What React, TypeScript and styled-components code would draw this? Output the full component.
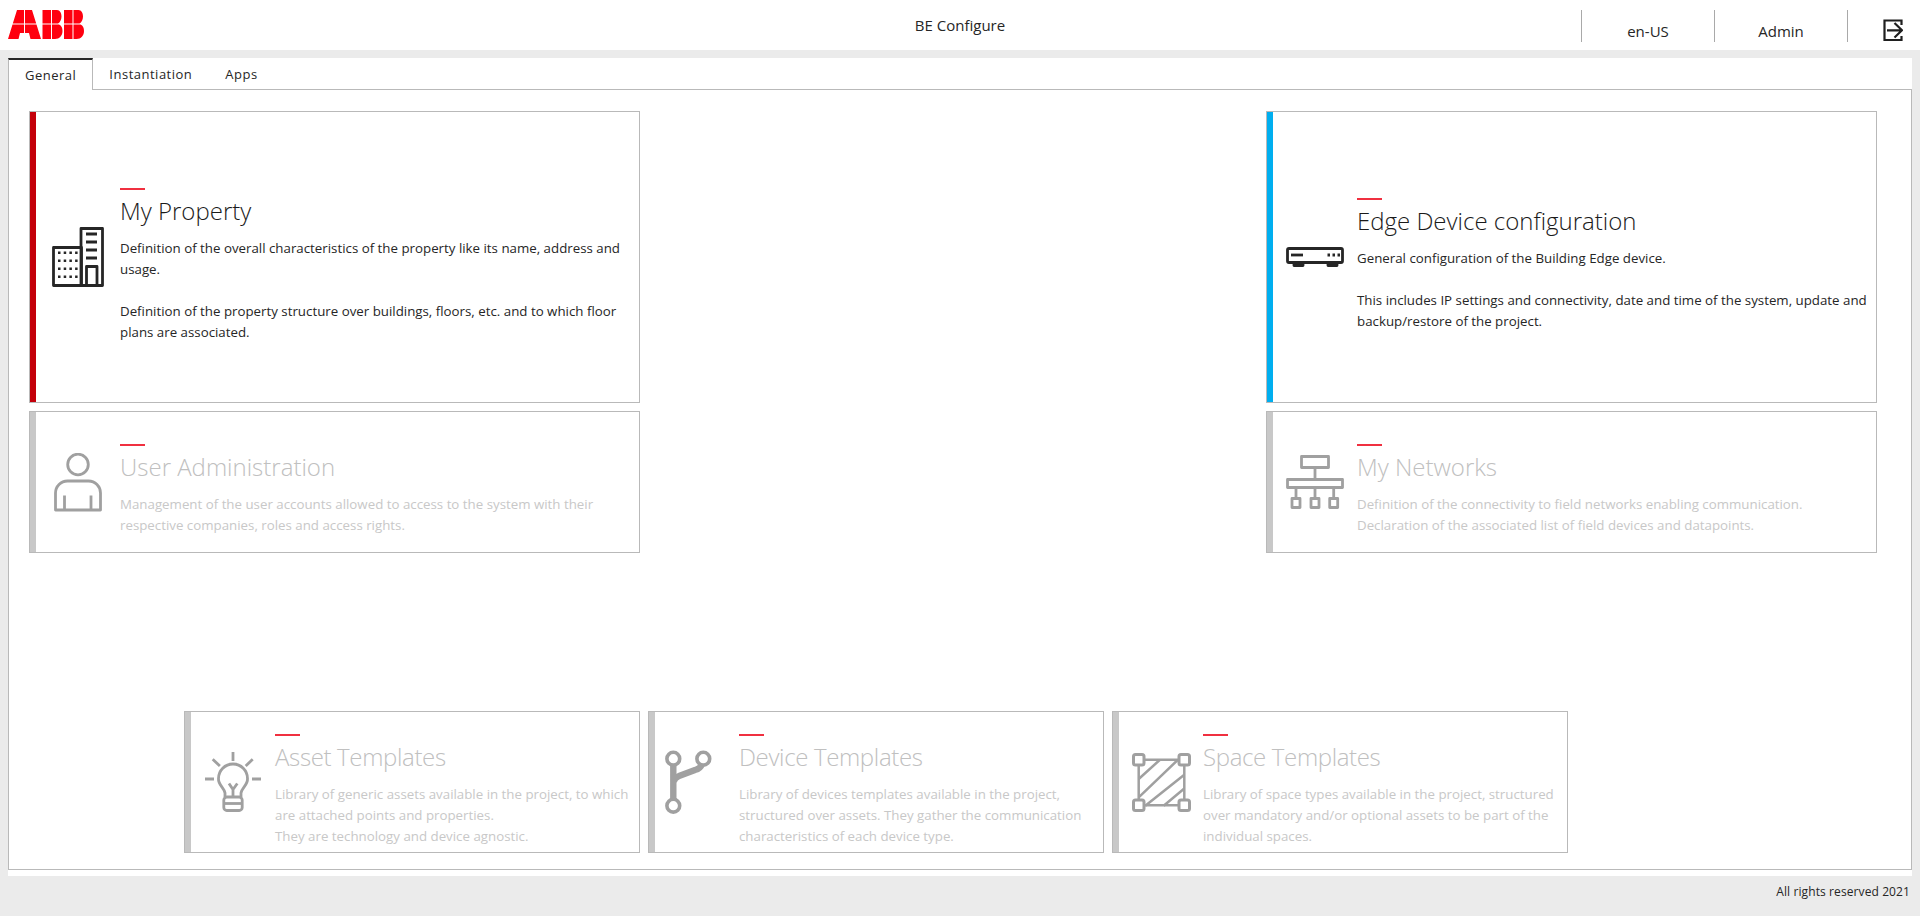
import React from 'react';
import styled, { createGlobalStyle } from 'styled-components';

const GlobalStyle = createGlobalStyle`
  html, body {
    margin: 0;
    padding: 0;
    background: #ebebeb;
    overflow: hidden;
  }
  * { box-sizing: border-box; }
`;

const Page = styled.div`
  width: 1920px;
  height: 916px;
  display: flex;
  flex-direction: column;
  font-family: "Open Sans", "Liberation Sans", sans-serif;
  color: #262626;
`;

const Header = styled.header`
  height: 50px;
  background: #fff;
  display: grid;
  grid-template-columns: 1581px 133px 133px 1fr;
  position: relative;
`;

const LogoBox = styled.div`
  padding: 10px 0 0 8px;
  svg { display: block; }
`;

const AppTitle = styled.div`
  position: absolute;
  left: 0;
  right: 0;
  top: 16px;
  text-align: center;
  font-size: 15px;
  line-height: 19px;
`;

const HeaderCell = styled.div`
  margin-top: 10px;
  height: 32px;
  border-left: 1px solid #a9a9a9;
  display: flex;
  align-items: center;
  justify-content: center;
  font-size: 15px;
  padding-top: 9px;
`;

const LogoutCell = styled(HeaderCell)`
  justify-content: flex-start;
  padding: 9px 0 0 35px;
`;

const Shell = styled.main`
  margin: 8px 8px 0;
  height: 818px;
  background: #fff;
  display: flex;
  flex-direction: column;
`;

const TabBar = styled.nav`
  display: flex;
  height: 31px;
`;

const Tab = styled.div<{ $active?: boolean }>`
  padding: 0 17px 0 16px;
  font-size: 13px;
  letter-spacing: 0.5px;
  line-height: 32px;
  color: #262626;
  ${(p) =>
    p.$active
      ? `
    border-top: 2px solid #262626;
    border-left: 1px solid #b9b9b9;
    border-right: 1px solid #b9b9b9;
    line-height: 30px;
    padding: 0 16px;
    position: relative;
    margin-bottom: -1px;
    background: #fff;
    z-index: 1;
  `
      : ''}
`;

const Panel = styled.section`
  height: 781px;
  border: 1px solid #b9b9b9;
  padding: 21px 34px 0 20px;
  display: flex;
  flex-direction: column;
`;

const TopRows = styled.div`
  display: flex;
  justify-content: space-between;
`;

const Column = styled.div`
  width: 611px;
  display: flex;
  flex-direction: column;
  gap: 8px;
`;

const TemplateRow = styled.div`
  display: flex;
  gap: 8px;
  margin: 158px 0 0 155px;

  h2 {
    letter-spacing: -0.35px;
  }
`;

const Card = styled.article<{ $h: number; $w?: number; $bar: string }>`
  width: ${(p) => p.$w ?? 611}px;
  height: ${(p) => p.$h}px;
  border: 1px solid #b9b9b9;
  display: flex;
  background: #fff;
  &::before {
    content: '';
    flex: 0 0 6px;
    background: ${(p) => p.$bar};
  }
`;

const IconSlot = styled.div<{ $dim?: boolean }>`
  flex: 0 0 84px;
  display: flex;
  align-items: center;
  justify-content: center;
  color: ${(p) => (p.$dim ? '#a0a0a0' : '#262626')};
  svg { display: block; }
`;

const Body = styled.div`
  flex: 1;
  min-width: 0;
  padding: 16px 8px 0 0;
  display: flex;
  flex-direction: column;
  justify-content: center;
`;

const Accent = styled.div`
  width: 25px;
  height: 2px;
  background: #f03040;
`;

const Title = styled.h2<{ $dim?: boolean }>`
  margin: 6px 0 12px;
  font-size: 24px;
  font-weight: 300;
  line-height: 30px;
  color: ${(p) => (p.$dim ? '#c0c0c0' : '#1a1a1a')};
`;

const Text = styled.p<{ $dim?: boolean }>`
  margin: 0;
  font-size: 13.3px;
  line-height: 21px;
  color: ${(p) => (p.$dim ? '#c8c8c8' : '#262626')};
`;

const Footer = styled.footer`
  flex: 1;
  text-align: right;
  padding: 7px 10px 0 0;
  font-size: 12px;
  font-weight: 500;
  letter-spacing: 0.1px;
  line-height: 18px;
`;

const LogoB = ({ x }: { x: number }) => (
  <path
    transform={`translate(${x} 0)`}
    d="M0 0H8.5V13.5H0ZM9.5 0H14.5C17.5 0 19 3 19 6.5C19 9.5 17.5 12.5 15.5 13.5H9.5ZM0 14.5H8.5V29H0ZM9.5 14.5H16.5C19 15.5 20 18 20 21C20 25.5 17 29 12.5 29H9.5Z"
  />
);

const Logo = () => (
  <svg width="76" height="29" viewBox="0 0 76 29" fill="#ff000f">
    <path d="M9 0H16V13.5H4.8ZM17 0H24L28.2 13.5H17ZM4.5 14.5H16V23H12L10.5 29H0ZM17 14.5H28.5L33 29H22.5L21 23H17Z" />
    <LogoB x={34.5} />
    <LogoB x={56} />
  </svg>
);

const LogoutIcon = () => (
  <svg width="20" height="23" viewBox="0 0 20 23" fill="none" stroke="#1f1f1f" strokeWidth="2.2">
    <path d="M18.5 6V1.5H1.5V21H18.5V17" />
    <path d="M4 11.3H19M11.5 4L19 11.3L11.5 18.5" />
  </svg>
);

const BuildingIcon = () => (
  <svg width="52" height="60" viewBox="0 0 52 60" fill="none" stroke="currentColor" strokeWidth="2.8" strokeLinejoin="round">
    <rect x="1.5" y="20.5" width="28" height="38" />
    <rect x="29" y="1.5" width="21.5" height="57" />
    <path d="M34 7H45M34 15H45M34 23H45M34 31H45" />
    <path d="M34.5 59V39.5H45V59" />
    <path
      strokeWidth="2.6"
      strokeDasharray="2.5 3.2"
      d="M6 25.7H26M6 33.7H26M6 41.7H26M6 49.7H26"
    />
  </svg>
);

const EdgeIcon = () => (
  <svg width="58" height="20" viewBox="0 0 58 20" fill="none" stroke="currentColor" strokeWidth="2.8" strokeLinejoin="round">
    <rect x="1.5" y="1.5" width="55" height="14" rx="1.5" />
    <path d="M8 16V18.5H17V16M42 16V18.5H51V16" />
    <path d="M5 8H17" />
    <path strokeDasharray="2.5 2.5" d="M41.5 8H54" />
  </svg>
);

const UserIcon = () => (
  <svg width="48" height="59" viewBox="0 0 48 59" fill="none" stroke="currentColor" strokeWidth="2.8" strokeLinejoin="round">
    <circle cx="24" cy="11.5" r="10.3" />
    <path d="M1.5 57V40A12 12 0 0 1 13.5 28H34.5A12 12 0 0 1 46.5 40V57Z" />
    <path d="M10.5 42.5V57M37 42.5V57" />
  </svg>
);

const NetworkIcon = () => (
  <svg width="58" height="54" viewBox="0 0 58 54" fill="none" stroke="currentColor" strokeWidth="2.8" strokeLinejoin="round">
    <rect x="15.5" y="1.5" width="27" height="11" />
    <rect x="1.5" y="24.5" width="55" height="8" />
    <path d="M29 13V24M10 33V43M29 33V43M47.7 33V43" />
    <rect x="6" y="43.5" width="8" height="9" />
    <rect x="25" y="43.5" width="8" height="9" />
    <rect x="43.7" y="43.5" width="8" height="9" />
  </svg>
);

const BulbIcon = () => (
  <svg width="56" height="60" viewBox="0 0 56 60" fill="none" stroke="currentColor" strokeWidth="2.8" strokeLinejoin="round">
    <path d="M28 0V9M0 27H9M47 27H56M7.7 7.3L14.9 14M47.7 7.3L40.7 14" />
    <path d="M20 45V41C19.5 36 13 33 13.5 26.5A14.5 14.5 0 1 1 42.5 26.5C43 33 36.5 36 36 41V45" />
    <path d="M24 31.5L28 37.5L32.3 31.5M28 37.5V45" />
    <rect x="18.8" y="45" width="18.4" height="13.5" rx="3" />
    <path d="M19 51.5H37" />
  </svg>
);

const ForkIcon = () => (
  <svg width="64" height="64" viewBox="0 0 64 64" fill="none" stroke="currentColor" strokeLinejoin="round">
    <circle cx="8.3" cy="8.7" r="6.4" strokeWidth="3.6" />
    <circle cx="38.3" cy="8.7" r="6.4" strokeWidth="3.6" />
    <circle cx="8.3" cy="55.7" r="6.4" strokeWidth="3.6" />
    <path strokeWidth="6.4" d="M8.3 15V49M8.3 32C10 28 12 27 14 26L30 20C34 19 36 17 37 14" />
  </svg>
);

const SpaceIcon = () => (
  <svg width="59" height="59" viewBox="0 0 59 59" fill="none" stroke="currentColor" strokeWidth="2.5" strokeLinejoin="round">
    <rect x="6.7" y="6.7" width="45.6" height="45.6" />
    <path d="M6.7 26L27.7 7M6.7 44.3L45.7 7M13.3 52.7L52.3 21.7M31.7 52.7L52.3 35.5" />
    <g fill="#fff" strokeWidth="3">
      <rect x="1.5" y="1.5" width="10.5" height="10.5" rx="2" />
      <rect x="47" y="1.5" width="10.5" height="10.5" rx="2" />
      <rect x="1.5" y="47" width="10.5" height="10.5" rx="2" />
      <rect x="47" y="47" width="10.5" height="10.5" rx="2" />
    </g>
  </svg>
);

type Tile = {
  title: string;
  icon: React.ReactNode;
  height: number;
  width?: number;
  bar: string;
  dim?: boolean;
  text: React.ReactNode;
};

const GREY = '#c8c8c8';

const left: Tile[] = [
  {
    title: 'My Property',
    icon: <BuildingIcon />,
    height: 292,
    bar: '#c4000a',
    text: (
      <>
        Definition of the overall characteristics of the property like its name, address and usage.
        <br />
        <br />
        Definition of the property structure over buildings, floors, etc. and to which floor plans are associated.
      </>
    ),
  },
  {
    title: 'User Administration',
    icon: <UserIcon />,
    height: 142,
    bar: GREY,
    dim: true,
    text: 'Management of the user accounts allowed to access to the system with their respective companies, roles and access rights.',
  },
];

const right: Tile[] = [
  {
    title: 'Edge Device configuration',
    icon: <EdgeIcon />,
    height: 292,
    bar: '#00aeef',
    text: (
      <>
        General configuration of the Building Edge device.
        <br />
        <br />
        This includes IP settings and connectivity, date and time of the system, update and backup/restore of the project.
      </>
    ),
  },
  {
    title: 'My Networks',
    icon: <NetworkIcon />,
    height: 142,
    bar: GREY,
    dim: true,
    text: (
      <>
        Definition of the connectivity to field networks enabling communication.
        <br />
        Declaration of the associated list of field devices and datapoints.
      </>
    ),
  },
];

const templates: Tile[] = [
  {
    title: 'Asset Templates',
    icon: <BulbIcon />,
    height: 142,
    width: 456,
    bar: GREY,
    dim: true,
    text: (
      <>
        Library of generic assets available in the project, to which are attached points and properties.
        <br />
        They are technology and device agnostic.
      </>
    ),
  },
  {
    title: 'Device Templates',
    icon: <ForkIcon />,
    height: 142,
    width: 456,
    bar: GREY,
    dim: true,
    text: 'Library of devices templates available in the project, structured over assets. They gather the communication characteristics of each device type.',
  },
  {
    title: 'Space Templates',
    icon: <SpaceIcon />,
    height: 142,
    width: 456,
    bar: GREY,
    dim: true,
    text: 'Library of space types available in the project, structured over mandatory and/or optional assets to be part of the individual spaces.',
  },
];

const renderTile = (t: Tile) => (
  <Card key={t.title} $h={t.height} $w={t.width} $bar={t.bar}>
    <IconSlot $dim={t.dim}>{t.icon}</IconSlot>
    <Body>
      <Accent />
      <Title $dim={t.dim}>{t.title}</Title>
      <Text $dim={t.dim}>{t.text}</Text>
    </Body>
  </Card>
);

const App: React.FC = () => (
  <Page>
    <GlobalStyle />
    <Header>
      <LogoBox>
        <Logo />
      </LogoBox>
      <AppTitle>BE Configure</AppTitle>
      <HeaderCell>en-US</HeaderCell>
      <HeaderCell>Admin</HeaderCell>
      <LogoutCell>
        <LogoutIcon />
      </LogoutCell>
    </Header>
    <Shell>
      <TabBar>
        <Tab $active>General</Tab>
        <Tab>Instantiation</Tab>
        <Tab>Apps</Tab>
      </TabBar>
      <Panel>
        <TopRows>
          <Column>{left.map(renderTile)}</Column>
          <Column>{right.map(renderTile)}</Column>
        </TopRows>
        <TemplateRow>{templates.map(renderTile)}</TemplateRow>
      </Panel>
    </Shell>
    <Footer>All rights reserved 2021</Footer>
  </Page>
);

export default App;
